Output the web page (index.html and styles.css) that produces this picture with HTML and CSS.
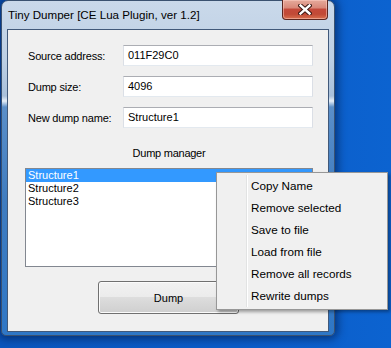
FILE: index.html
```html
<!DOCTYPE html>
<html>
<head>
<meta charset="utf-8">
<link rel="stylesheet" href="styles.css">
</head>
<body>
<div class="window">
  <div class="titlebar">
    <span class="title">Tiny Dumper [CE Lua Plugin, ver 1.2]</span>
    <div class="close">
      <svg width="14" height="11" viewBox="0 0 14 11">
        <path d="M2.5 1.5 L11.5 9.5 M11.5 1.5 L2.5 9.5" stroke="#3a1712" stroke-width="4.4" stroke-linecap="square" fill="none"/>
        <path d="M2.5 1.5 L11.5 9.5 M11.5 1.5 L2.5 9.5" stroke="#ffffff" stroke-width="2.4" stroke-linecap="square" fill="none"/>
      </svg>
    </div>
  </div>
  <div class="client">
    <div class="form">
      <div class="row"><span class="label">Source address:</span><div class="input">011F29C0</div></div>
      <div class="row"><span class="label">Dump size:</span><div class="input">4096</div></div>
      <div class="row"><span class="label">New dump name:</span><div class="input">Structure1</div></div>
    </div>
    <div class="section-title">Dump manager</div>
    <div class="listbox">
      <div class="item selected">Structure1</div>
      <div class="item">Structure2</div>
      <div class="item">Structure3</div>
    </div>
    <div class="actions"><div class="btn">Dump</div></div>
  </div>
</div>
<div class="menu">
  <div class="mi">Copy Name</div>
  <div class="mi">Remove selected</div>
  <div class="mi">Save to file</div>
  <div class="mi">Load from file</div>
  <div class="mi">Remove all records</div>
  <div class="mi">Rewrite dumps</div>
</div>
</body>
</html>
```

FILE: styles.css
```css
html, body {
  margin: 0;
  padding: 0;
}
body {
  width: 391px;
  height: 348px;
  overflow: hidden;
  background: linear-gradient(90deg, #0a56bd 0%, #0b5cc8 60%, #0c63d0 100%);
  font-family: "Liberation Sans", Arial, sans-serif;
  position: relative;
}
.window {
  box-sizing: border-box;
  width: 334px;
  height: 336px;
  margin-left: 1px;
  border: 1px solid #3b5270;
  border-radius: 7px 7px 5px 5px;
  padding: 0 5px 3px 5px;
  background: linear-gradient(180deg, #cad9ea 0px, #bccfe4 60px, #a9c0da 95px, #e7eff8 100px, #5b8fc9 106px, #3f7cc0 200px, #2f77c6 100%);
  box-shadow: 0 0 9px 3px rgba(2, 20, 60, 0.55);
}
.titlebar {
  height: 28px;
  display: flex;
  justify-content: space-between;
  align-items: flex-start;
}
.title {
  margin-left: 1px;
  margin-top: 6px;
  font-size: 11.6px;
  color: #000;
  line-height: 15px;
}
.close {
  box-sizing: border-box;
  width: 46px;
  height: 20px;
  margin-top: -1px;
  margin-right: 1px;
  border: 1px solid #5a2620;
  border-top: none;
  border-radius: 0 0 4px 4px;
  background: linear-gradient(180deg, #e6aa9c 0%, #d9897a 40%, #c4493a 50%, #c14a36 75%, #d9704f 100%);
  box-shadow: inset 0 0 0 1px rgba(255, 210, 200, 0.5);
  display: flex;
  align-items: center;
  justify-content: center;
}
.close svg {
  display: block;
}
.client {
  box-sizing: border-box;
  height: 303px;
  border: 1px solid #41597a;
  background: #f0f0f0;
  padding: 15px 15px 0 0;
  font-size: 11px;
  color: #000;
}
.form {
  display: flex;
  flex-direction: column;
  gap: 10px;
}
.row {
  display: flex;
  align-items: center;
  height: 21px;
}
.label {
  flex: 0 0 95px;
  padding-left: 20px;
  font-size: 11px;
  letter-spacing: -0.2px;
}
.input {
  box-sizing: border-box;
  width: 190px;
  height: 21px;
  background: #fff;
  border: 1px solid #dbdfe6;
  border-top-color: #abadb3;
  border-bottom-color: #e3e9ef;
  padding: 0 0 0 4px;
  line-height: 19px;
  font-size: 11px;
}
.section-title {
  margin-top: 19px;
  height: 13px;
  line-height: 13px;
  text-align: center;
  padding-left: 17px;
  letter-spacing: -0.25px;
}
.listbox {
  box-sizing: border-box;
  margin: 8px 0 0 17px;
  width: 288px;
  height: 99px;
  background: #fff;
  border: 1px solid #828790;
}
.item {
  height: 13px;
  line-height: 13px;
  padding-left: 2px;
}
.item.selected {
  background: #3399ff;
  color: #fff;
}
.actions {
  margin-top: 14px;
  padding-left: 90px;
}
.btn {
  box-sizing: border-box;
  width: 141px;
  height: 33px;
  border: 1px solid #707070;
  border-radius: 3px;
  background: linear-gradient(180deg, #f2f2f2 0%, #ebebeb 48%, #dddddd 50%, #cfcfcf 100%);
  box-shadow: inset 0 0 0 1px #fbfbfb;
  display: flex;
  align-items: center;
  justify-content: center;
  font-size: 11px;
}
.menu {
  position: absolute;
  left: 216px;
  top: 172px;
  box-sizing: border-box;
  width: 172px;
  height: 138px;
  padding: 2px 0;
  border: 1px solid #979797;
  background: linear-gradient(90deg, transparent 29px, #e2e3e3 29px, #e2e3e3 30px, #ffffff 30px, #ffffff 31px, transparent 31px) no-repeat 0 2px / 100% 132px, #f0f0f0;
  box-shadow: 2px 2px 3px rgba(0, 0, 0, 0.35);
}
.mi {
  height: 22px;
  line-height: 22px;
  padding-left: 34px;
  font-size: 11.7px;
  color: #000;
}
```
